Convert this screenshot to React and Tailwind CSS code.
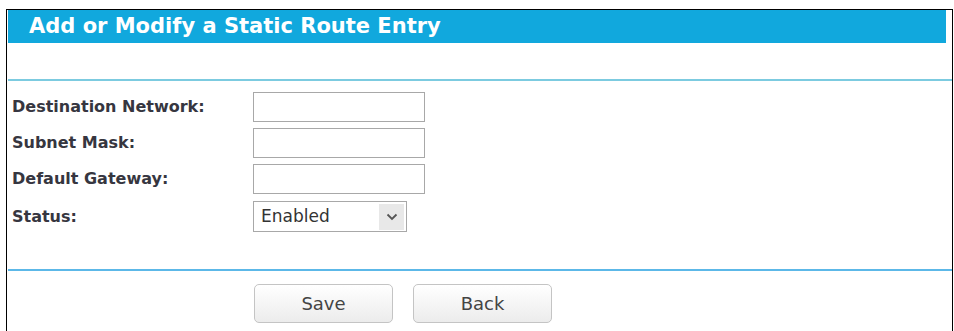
export default function App() {
  const rows = [
    { label: "Destination Network:" },
    { label: "Subnet Mask:" },
    { label: "Default Gateway:" },
  ];

  return (
    <div className="bg-white w-[954px] h-[331px] overflow-hidden pt-[9px] pl-[6px] pr-[1px] font-['DejaVu_Sans',sans-serif]">
      <div className="h-[340px] border-l border-t border-r border-black pl-[1px]">
        {/* Header */}
        <div className="h-[33px] mr-[6px] bg-[#11a8dd] flex items-center pl-[21px]">
          <h1 className="text-white font-bold text-[21px] leading-none pb-[1px]">
            Add or Modify a Static Route Entry
          </h1>
        </div>

        <div className="mt-[36px] h-[2px] bg-[#7ccbe0]" />

        {/* Form */}
        <div className="pt-[11px] pl-[4px] flex flex-col gap-[6px]">
          {rows.map((r) => (
            <div key={r.label} className="flex items-center h-[30px]">
              <label className="w-[241px] text-[16px] font-bold text-[#363640]">{r.label}</label>
              <input
                type="text"
                className="w-[172px] h-[30px] border border-[#a8a8a8] bg-white outline-none"
              />
            </div>
          ))}
          <div className="flex items-center h-[31px] mt-[1px]">
            <label className="w-[241px] text-[16px] font-bold text-[#363640]">Status:</label>
            <div className="w-[154px] h-[31px] border border-[#a8a8a8] bg-white flex items-center pl-[7px] pr-[2px]">
              <span className="flex-1 text-[17px] text-[#333]">Enabled</span>
              <div className="w-[25px] h-[26px] bg-[#e8e8e8] flex items-center justify-center">
                <svg width="12" height="8" viewBox="0 0 12 8">
                  <polyline points="1.5,1.5 6,6 10.5,1.5" fill="none" stroke="#555" strokeWidth="1.8" />
                </svg>
              </div>
            </div>
          </div>
        </div>

        <div className="mt-[37px] h-[2px] bg-[#5cb8e8]" />

        {/* Buttons */}
        <div className="pt-[13px] pl-[246px] flex gap-[20px]">
          <button className="w-[139px] h-[39px] rounded-[5px] border border-[#c4c4c4] bg-gradient-to-b from-white to-[#ececec] text-[18px] text-[#444]">
            Save
          </button>
          <button className="w-[139px] h-[39px] rounded-[5px] border border-[#c4c4c4] bg-gradient-to-b from-white to-[#ececec] text-[18px] text-[#444]">
            Back
          </button>
        </div>
      </div>
    </div>
  );
}
